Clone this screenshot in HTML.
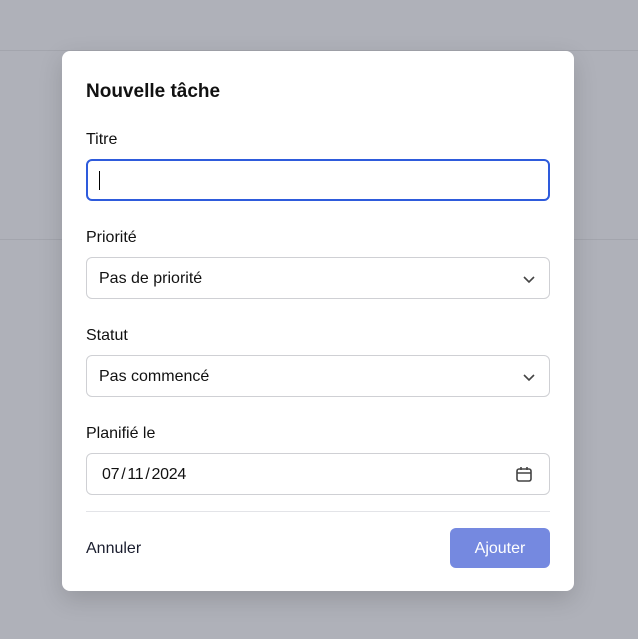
<!DOCTYPE html><html><head><style>
body{margin:0;width:638px;height:639px;background:#afb1b9;font-family:"Liberation Sans",sans-serif;position:relative;overflow:hidden}
.l{position:absolute;left:0;width:638px;height:1px;background:#a3a5ad}
.m{position:absolute;left:62px;top:51px;width:512px;height:540px;background:#fff;border-radius:8px;box-shadow:0 8px 24px rgba(0,0,0,.15)}
.a{position:absolute;left:24px;color:#111;font-size:16px}
.i{position:absolute;left:24px;width:462px;height:40px;border:1px solid #cfd0d4;border-radius:6px;box-sizing:content-box;font-size:16px;color:#111}
.i span{position:absolute;left:12px;top:12px}
</style></head><body>
<div class="l" style="top:50px"></div><div class="l" style="top:239px"></div>
<div class="m">
<div class="a" style="top:30px;font-size:19px;font-weight:bold">Nouvelle tâche</div>
<div class="a" style="top:80px">Titre</div>
<div class="i" style="top:108px;border:2px solid #2e5bdc;width:460px;height:38px"><div style="position:absolute;left:11px;top:10px;width:1px;height:19px;background:#000"></div></div>
<div class="a" style="top:178px">Priorité</div>
<div class="i" style="top:206px"><span>Pas de priorité</span><svg style="position:absolute;right:14px;top:15px" width="12" height="12" viewBox="0 0 12 12"><path d="M1 4l5 5 5-5" fill="none" stroke="#444" stroke-width="1.6"/></svg></div>
<div class="a" style="top:276px">Statut</div>
<div class="i" style="top:304px"><span>Pas commencé</span><svg style="position:absolute;right:14px;top:15px" width="12" height="12" viewBox="0 0 12 12"><path d="M1 4l5 5 5-5" fill="none" stroke="#444" stroke-width="1.6"/></svg></div>
<div class="a" style="top:374px">Planifié le</div>
<div class="i" style="top:402px"><span style="left:15px;letter-spacing:-0.3px">07<span style="position:static;margin:0 2px">/</span>11<span style="position:static;margin:0 2px">/</span>2024</span><svg style="position:absolute;right:17px;top:12px" width="16" height="16" viewBox="0 0 16 16"><rect x="1" y="3" width="14" height="12" rx="2" fill="none" stroke="#444" stroke-width="1.6"/><path d="M1 7h14M5 1v3M11 1v3" stroke="#444" stroke-width="1.6"/></svg></div>
<div style="position:absolute;left:24px;top:460px;width:464px;height:1px;background:#e3e4e8"></div>
<div class="a" style="top:489px;color:#1a1d2e">Annuler</div>
<div style="position:absolute;left:388px;top:477px;width:100px;height:40px;background:#7589e0;border-radius:6px;color:#fff;font-size:16px;text-align:center;line-height:42px">Ajouter</div>
</div>
</body></html>
